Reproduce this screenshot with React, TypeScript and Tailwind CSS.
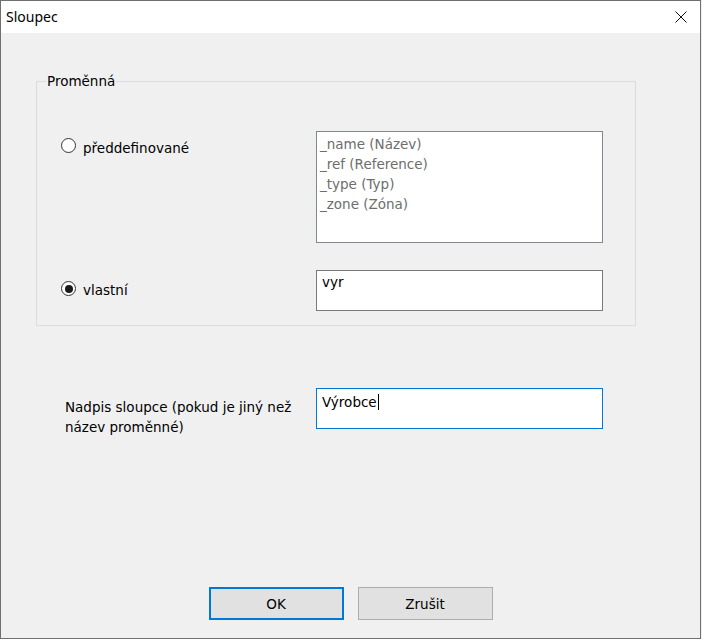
import React from "react";

const items = ["_name (Název)", "_ref (Reference)", "_type (Typ)", "_zone (Zóna)"];

function Radio({ checked }: { checked?: boolean }) {
  return (
    <span className="flex h-[15px] w-[15px] shrink-0 items-center justify-center rounded-full border border-[#333333] bg-white">
      {checked && <span className="h-[8px] w-[8px] rounded-full bg-[#1a1a1a]" />}
    </span>
  );
}

function CloseIcon() {
  return (
    <svg width="12" height="12" viewBox="0 0 12 12" aria-hidden="true">
      <path d="M0.5 0.5 L11.5 11.5 M11.5 0.5 L0.5 11.5" stroke="#111" strokeWidth="1" fill="none" />
    </svg>
  );
}

export default function App() {
  return (
    <div className="h-[639px] w-[702px] bg-[#f0f0f0]">
      <div
        className="flex h-[639px] w-[701px] flex-col border border-[#6f6f6f] bg-[#f0f0f0] text-[13.5px] text-black"
        style={{ fontFamily: '"DejaVu Sans", Verdana, sans-serif' }}
      >
        {/* title bar */}
        <div className="flex h-[32px] shrink-0 items-center justify-between bg-white pl-[5px] pr-[13px]">
          <span className="text-[14px] leading-[20px]" style={{ fontFamily: '"Noto Sans", "Open Sans", sans-serif' }}>
            Sloupec
          </span>
          <CloseIcon />
        </div>

        {/* Proměnná group */}
        <fieldset className="ml-[35px] mt-[40px] w-[600px] border border-[#dcdcdc] pb-[14px] pl-[24px] pt-[42px]">
          <legend className="-ml-[15px] px-[1px] leading-[16px]">Proměnná</legend>

          <div className="grid grid-cols-[255px_287px] gap-y-[27px]">
            <label className="flex items-start gap-[7px] pt-[7px]">
              <Radio />
              <span className="pt-[2px] leading-[16px]">předdefinované</span>
            </label>
            <div className="h-[112px] border border-[#828790] bg-white pl-[3px] pt-[2px] leading-[20px] text-[#6d6d6d]">
              {items.map((it) => (
                <div key={it}>{it}</div>
              ))}
            </div>

            <label className="flex items-start gap-[7px] pt-[11px]">
              <Radio checked />
              <span className="pt-[1px] leading-[16px]">vlastní</span>
            </label>
            <div className="h-[41px] border border-[#7a7a7a] bg-white pl-[5px] pt-[1px] leading-[20px]">vyr</div>
          </div>
        </fieldset>

        {/* column caption */}
        <div className="ml-[64px] mt-[62px] flex">
          <div className="w-[251px] pt-[9px] leading-[20px]">
            Nadpis sloupce (pokud je jiný než
            <br />
            název proměnné)
          </div>
          <div className="flex h-[41px] w-[287px] items-start border border-[#0078d7] bg-white pl-[5px] pt-[3px] leading-[20px]">
            <span>Výrobce</span>
            <span className="ml-[1px] mt-[2px] h-[16px] border-l border-black" />
          </div>
        </div>

        {/* buttons */}
        <div className="mt-auto flex justify-center gap-[14px] pb-[18px]">
          <button className="h-[33px] w-[135px] border-2 border-[#0078d7] bg-[#e1e1e1] leading-[16px]">OK</button>
          <button className="h-[33px] w-[135px] border border-[#adadad] bg-[#e1e1e1] leading-[16px]">Zrušit</button>
        </div>
      </div>
    </div>
  );
}
